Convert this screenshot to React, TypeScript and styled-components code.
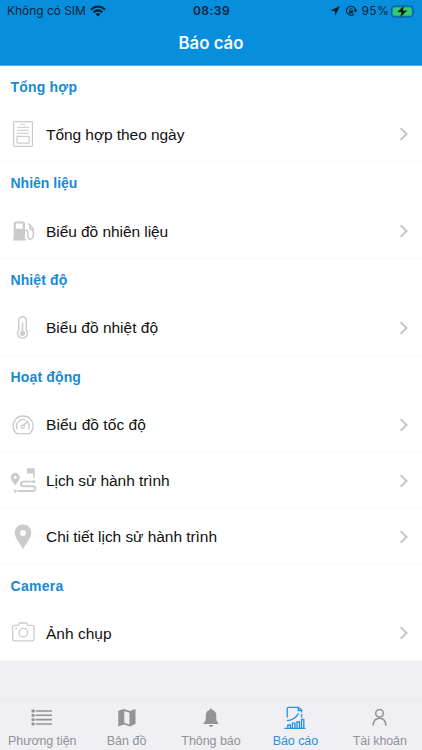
import React from "react";
import styled, { createGlobalStyle } from "styled-components";

const GlobalStyle = createGlobalStyle`
  * { box-sizing: border-box; }
  body { margin: 0; background: #efeff4; }
`;

const helvetica = `"Liberation Sans", Arial, sans-serif`;
const system = `Inter, "Liberation Sans", sans-serif`;

const Screen = styled.div`
  width: 422px;
  height: 750px;
  display: flex;
  flex-direction: column;
  overflow: hidden;
  background: #efeff4;
  font-family: ${helvetica};
`;

const Header = styled.header`
  flex: none;
  height: 65.5px;
  background: #078fdd;
  border-bottom: 1px solid #5aaee4;
`;

const StatusBar = styled.div`
  height: 22px;
  padding: 0 6px 0 7px;
  display: grid;
  grid-template-columns: 1fr auto 1fr;
  align-items: center;
  font-family: ${system};
  font-size: 12px;
  line-height: 22px;
  color: #06233a;
`;

const StatusGroup = styled.div<{ $end?: boolean }>`
  display: flex;
  align-items: center;
  justify-content: ${(p) => (p.$end ? "flex-end" : "flex-start")};
  height: 22px;
  svg { flex: none; display: block; }
`;

const Carrier = styled.span`
  margin-right: 4px;
  letter-spacing: -0.05px;
`;

const Clock = styled.span`
  font-weight: 600;
  letter-spacing: 0.5px;
`;

const Percent = styled.span`
  margin: 0 2px 0 5px;
  letter-spacing: 0.3px;
`;

const Title = styled.h1`
  margin: 0;
  height: 43px;
  line-height: 43px;
  text-align: center;
  font-family: ${system};
  font-weight: 600;
  font-size: 16.8px;
  color: #f4faff;
`;

const Section = styled.section`
  flex: none;
  background: #fff;
`;

const SectionTitle = styled.h2<{ $tracking: number }>`
  margin: 0;
  height: 40.75px;
  padding-left: 10.5px;
  line-height: 42px;
  font-weight: 700;
  font-size: 14px;
  letter-spacing: ${(p) => p.$tracking}px;
  color: #178ad5;
`;

const Row = styled.div`
  height: 56px;
  display: flex;
  align-items: center;
  padding: 1px 13px 0 9px;
  border-bottom: 1px solid #f8f8f8;
`;

const RowIcon = styled.span`
  width: 28px;
  height: 28px;
  margin-right: 9px;
  svg { display: block; }
`;

const RowLabel = styled.span<{ $tracking: number }>`
  flex: 1;
  padding-top: 1px;
  font-size: 15.5px;
  line-height: 20px;
  letter-spacing: ${(p) => p.$tracking}px;
  color: #111;
`;

const TabBar = styled.nav`
  flex: none;
  margin-top: auto;
  height: 51px;
  border-top: 1px solid #e9e9ee;
  display: grid;
  grid-template-columns: repeat(5, 1fr);
`;

const Tab = styled.div<{ $active?: boolean }>`
  display: flex;
  flex-direction: column;
  align-items: center;
  color: ${(p) => (p.$active ? "#2b91dc" : "#929299")};
  svg { display: block; margin-top: 6px; }
`;

const TabLabel = styled.span<{ $tracking: number }>`
  margin-top: 3px;
  font-size: 12.5px;
  line-height: 17px;
  white-space: nowrap;
  letter-spacing: ${(p) => p.$tracking}px;
`;

const Wifi = () => (
  <svg width="16" height="12" viewBox="0 0 16 12" fill="none" stroke="#041c30" strokeWidth="2.1">
    <path d="M1 4.6Q8-1.6 15 4.6M3.6 7.3Q8 3.6 12.4 7.3" />
    <path d="M5.6 9Q8 7.2 10.4 9L8 11.5Z" fill="#041c30" stroke="none" />
  </svg>
);

const StatusIcons = () => (
  <svg width="27" height="12" viewBox="0 0 27 12" fill="none">
    <path d="M10 1L.5 5.6l4.3.6.5 4.400Z" fill="#041c30" />
    <path d="M24.200 9.200a4.600 4.600 0 1 1 1.500-3.100M24 5l1.700 1.700L27 4.800" stroke="#06233a" strokeWidth="1.1" />
    <path d="M19 5.500h4v3h-4z" fill="#06233a" />
    <path d="M19.800 5.600V4.400a1.200 1.200 0 0 1 2.400 0v1.200" stroke="#06233a" strokeWidth=".8" />
  </svg>
);

const Battery = () => (
  <svg width="25" height="13" viewBox="0 0 25 13">
    <rect x=".5" y="1" width="21.5" height="11" rx="3" fill="none" stroke="#07588d" />
    <rect x="2" y="2.5" width="18.5" height="8" rx="1.6" fill="#39cb67" />
    <path d="M23.200 4.800q1.400 1.700 0 3.400Z" fill="#07588d" />
    <path d="M12.900.8L6.400 7h4.100L9.200 12.200 16.200 5.600h-4.300Z" fill="#041410" stroke="#16835c" strokeWidth=".4" />
  </svg>
);

const Chevron = () => (
  <svg width="10" height="14" viewBox="0 0 10 14" fill="none" stroke="#c5c5c8" strokeWidth="1.9">
    <path d="M1.600 1.300L7.600 7l-6 5.700" />
  </svg>
);

const grey = "#cbcbcd";

const icons: Record<string, React.ReactNode> = {
  report: (
    <g fill="none" stroke={grey}>
      <rect x="4.6" y="1.6" width="18.8" height="24.8" rx=".8" strokeWidth="1.2" />
      <path d="M11.500 4.300h5M8 7.200h12M8 10.200h12M8 13.200h12" strokeWidth="1.1" />
      <rect x="8" y="16.3" width="12.2" height="6.8" rx=".5" strokeWidth="1.2" />
    </g>
  ),
  fuel: (
    <g>
      <path fillRule="evenodd" fill={grey} d="M6.500 4.500h7.500a2 2 0 0 1 2 2V22h1v1.500H4V22h.7V6.500a2 2 0 0 1 1.800-2ZM6.800 6.500v5.200h7V6.500Z" />
      <path d="M16 13.400h1.800q1 0 1 1.200v5.200q0 2 2.100 2.400t3.400-2.400v-8.200l-5-5.100M21 9v2.200q0 1.400 3 1.700" fill="none" stroke={grey} strokeWidth="1.500" />
    </g>
  ),
  thermometer: (
    <g fill="none" stroke={grey}>
      <path d="M9.700 16V6.500a3.800 3.800 0 0 1 7.600 0V16a4.900 4.900 0 1 1-7.600 0Z" strokeWidth="1.500" />
      <path d="M13.500 8.500V19" strokeWidth="1.600" />
      <circle cx="13.5" cy="19.3" r="2.6" fill={grey} stroke="none" />
    </g>
  ),
  gauge: (
    <g fill="none" stroke={grey} strokeWidth="1.3" strokeLinecap="round">
      <path d="M7.600 22.600a10 10 0 1 1 13 0Z" />
      <path d="M8.200 18a6.600 6.600 0 0 1 8.400-9M19 11.500a6.600 6.600 0 0 1 .7 6.500" />
      <path d="M13.400 15.800l5-5.600" strokeWidth="1.700" />
      <circle cx="13.7" cy="15.7" r="1.6" fill="#fff" />
    </g>
  ),
  route: (
    <g>
      <path fillRule="evenodd" fill={grey} d="M6.200 5.800a4.500 4.500 0 0 1 4.500 4.600c0 2.900-2.900 5.300-4.500 7.900-1.600-2.600-4.500-5-4.500-7.900a4.500 4.500 0 0 1 4.500-4.600Zm0 2.900a1.600 1.600 0 1 0 0 3.200 1.600 1.600 0 0 0 0-3.200Z" />
      <path d="M18 1.200h7.800V11h-1.500V6.600H18Z" fill={grey} />
      <circle cx="24.7" cy="14.6" r="1.600" fill={grey} />
      <circle cx="6.3" cy="24" r="1.600" fill={grey} />
      <path d="M22 14.600h-7.700a2.200 2.200 0 0 0 0 4.600h9.600a2.400 2.400 0 0 1 0 4.800H9.500" fill="none" stroke={grey} strokeWidth="1.900" strokeLinecap="round" />
    </g>
  ),
  pin: (
    <path fillRule="evenodd" fill={grey} d="M14 1.600c4.700 0 8.200 3.500 8.200 8.100 0 5.600-5 10.200-8.200 16.500-3.200-6.300-8.200-10.900-8.200-16.500 0-4.600 3.500-8.100 8.200-8.100Zm0 5.300a3 3 0 1 0 0 6 3 3 0 0 0 0-6Z" />
  ),
  camera: (
    <g fill="none" stroke={grey} strokeWidth="1.3">
      <path d="M5 6.300h4.300l1.500-2.300h6.600l1.500 2.300H23q2 0 2 2v11.500q0 2-2 2H5.600q-2 0-2-2V8.300q0-2 2-2Z" />
      <circle cx="14.3" cy="13.7" r="4.3" />
      <circle cx="7.2" cy="9.500" r=".9" fill={grey} stroke="none" />
    </g>
  ),
};

const tabIcons: Record<string, React.ReactNode> = {
  list: (
    <g fill="currentColor">
      {[5, 9.3, 13.6, 18].map((y) => (
        <g key={y}>
          <rect x="1.5" y={y - 1.4} width="3.2" height="2.8" rx=".8" />
          <rect x="5.5" y={y - 0.8} width="16.6" height="1.6" rx=".7" />
        </g>
      ))}
    </g>
  ),
  map: (
    <path fillRule="evenodd" fill="currentColor" d="M3.300 4.700L9 3l6 2 5.500-2v14.700L15 20.500l-6-2-5.700 2ZM9.300 5v11.800l5.200 1.800V6.700Z" />
  ),
  bell: (
    <path fill="currentColor" d="M12 2.600q1.300 0 1.300 1.500c3 .7 4 3 4 6v4.200l2 2.800v.9H4.700v-.9l2-2.800v-4.200c0-3 1-5.300 4-6q0-1.500 1.300-1.500ZM9.900 19h4.200q-.5 2-2.100 2t-2.100-2Z" />
  ),
  chart: (
    <g fill="none" stroke="currentColor" strokeWidth="1.3">
      <path d="M4.200 11.500V3q0-1.700 1.700-1.700h9.500L18.600 4v2.500M18.600 8v3.500M15.200 1.500v3h3.300M3.800 14.600c5.500-.2 9-2.600 11.800-7.300M1.300 22.300h21.200" />
      <path d="M4.800 22v-3h2.600v3M9.400 22v-4.800H12V22M14 22v-6h2.500v6M18.500 22v-8.500h2.300V22" />
    </g>
  ),
  user: (
    <g fill="none" stroke="currentColor" strokeWidth="1.5" strokeLinecap="round">
      <circle cx="11.5" cy="7.300" r="3.800" />
      <path d="M5.100 19c.5-4.300 2.800-6.700 6.400-6.700s5.900 2.400 6.400 6.700" />
    </g>
  ),
};

const sections = [
  { title: "Tổng hợp", tracking: 0.2, rows: [{ icon: "report", label: "Tổng hợp theo ngày", tracking: -0.06 }] },
  { title: "Nhiên liệu", tracking: 0, rows: [{ icon: "fuel", label: "Biểu đồ nhiên liệu", tracking: -0.06 }] },
  { title: "Nhiệt độ", tracking: 0.1, rows: [{ icon: "thermometer", label: "Biểu đồ nhiệt độ", tracking: 0 }] },
  {
    title: "Hoạt động",
    tracking: 0.15,
    rows: [
      { icon: "gauge", label: "Biểu đồ tốc độ", tracking: 0.06 },
      { icon: "route", label: "Lịch sử hành trình", tracking: -0.08 },
      { icon: "pin", label: "Chi tiết lịch sử hành trình", tracking: -0.05 },
    ],
  },
  { title: "Camera", tracking: 0.3, rows: [{ icon: "camera", label: "Ảnh chụp", tracking: 0 }] },
];

const tabs = [
  { icon: "list", label: "Phương tiện", tracking: -0.1 },
  { icon: "map", label: "Bản đồ", tracking: 0 },
  { icon: "bell", label: "Thông báo", tracking: -0.05 },
  { icon: "chart", label: "Báo cáo", tracking: -0.05, active: true },
  { icon: "user", label: "Tài khoản", tracking: -0.1 },
];

export default function App() {
  return (
    <Screen>
      <GlobalStyle />
      <Header>
        <StatusBar>
          <StatusGroup>
            <Carrier>Không có SIM</Carrier>
            <Wifi />
          </StatusGroup>
          <Clock>08:39</Clock>
          <StatusGroup $end>
            <StatusIcons />
            <Percent>95%</Percent>
            <Battery />
          </StatusGroup>
        </StatusBar>
        <Title>Báo cáo</Title>
      </Header>
      {sections.map((section) => (
        <Section key={section.title}>
          <SectionTitle $tracking={section.tracking}>{section.title}</SectionTitle>
          {section.rows.map((row) => (
            <Row key={row.label}>
              <RowIcon>
                <svg width="28" height="28" viewBox="0 0 28 28">{icons[row.icon]}</svg>
              </RowIcon>
              <RowLabel $tracking={row.tracking}>{row.label}</RowLabel>
              <Chevron />
            </Row>
          ))}
        </Section>
      ))}
      <TabBar>
        {tabs.map((tab) => (
          <Tab key={tab.label} $active={tab.active}>
            <svg width="24" height="24" viewBox="0 0 24 24">{tabIcons[tab.icon]}</svg>
            <TabLabel $tracking={tab.tracking}>{tab.label}</TabLabel>
          </Tab>
        ))}
      </TabBar>
    </Screen>
  );
}
